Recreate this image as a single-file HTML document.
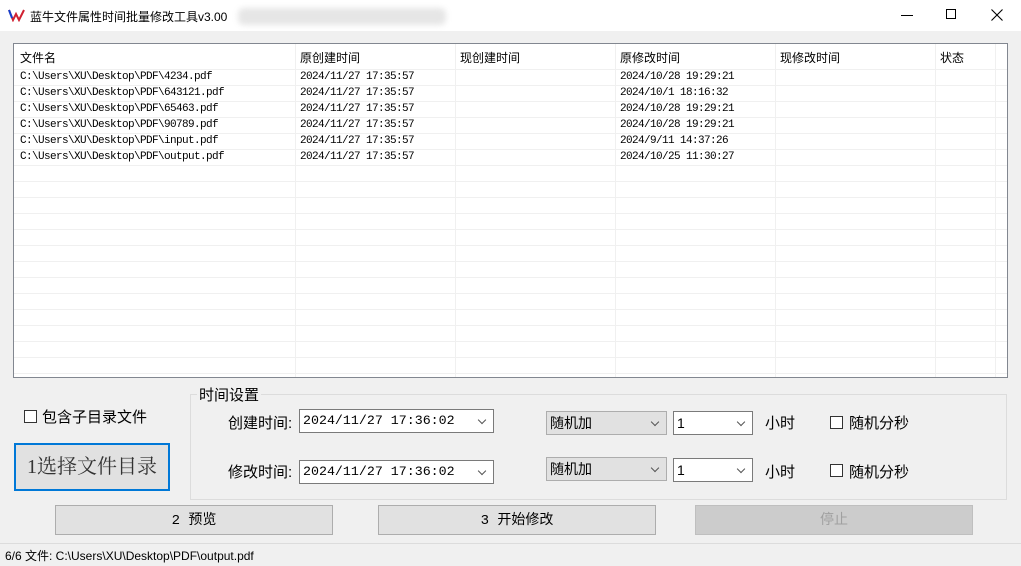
<!DOCTYPE html>
<html><head><meta charset="utf-8"><style>
*{margin:0;padding:0;box-sizing:border-box}
body{width:1021px;height:566px;background:#f0f0f0;position:relative;overflow:hidden;font-family:"Liberation Sans","Noto Sans CJK SC",sans-serif;color:#000}
.a{position:absolute;white-space:nowrap}
.title{left:0;top:0;width:1021px;height:31px;background:#fff}
.list{left:13px;top:43px;width:995px;height:335px;background:#fff;border:1px solid #828790;overflow:hidden}
.grid{left:0;top:25px;width:993px;height:320px;background:repeating-linear-gradient(to bottom,#f0f0f0 0,#f0f0f0 1px,transparent 1px,transparent 16px)}
.vl{position:absolute;top:0;width:1px;height:340px;background:#f0f0f0}
.hd{position:absolute;top:5px;font-size:12px}
.r{position:absolute;font-family:"Liberation Mono","Noto Sans CJK SC",monospace;font-size:11px;letter-spacing:-0.6px;line-height:16px;top:25px}
.cb{width:13px;height:13px;border:1px solid #333;background:#fff}
.combo{border:1px solid #7a7a7a;background:#fff;height:24px;font-size:14px;line-height:22px;padding-left:3px}
.mono{font-family:"Liberation Mono",monospace;font-size:13.3px}
.combo:after{content:"";position:absolute;right:8px;top:7px;width:5px;height:5px;border-right:1px solid #555;border-bottom:1px solid #555;transform:rotate(45deg)}
.gray{background:#e1e1e1;border-color:#adadad}
.btn{height:30px;background:#e1e1e1;border:1px solid #adadad;font-size:14px;line-height:30px;text-align:center;font-family:"Liberation Mono","Noto Sans CJK SC",monospace}
.lbl{font-size:15px}
</style></head><body>
<div class="a title"></div>
<svg class="a" style="left:8px;top:8px" width="18" height="14" viewBox="0 0 18 14"><path d="M1 2 L5 12 L8 6 L11 12 L16 2" fill="none" stroke="#d02030" stroke-width="2"/><path d="M1 2 L4 10" stroke="#1040d0" stroke-width="2"/></svg>
<div class="a" style="left:30px;top:8px;font-size:12px">蓝牛文件属性时间批量修改工具v3.00</div>
<div class="a" style="left:238px;top:8px;width:208px;height:17px;background:#e6e6e6;filter:blur(3px);border-radius:6px"></div>
<div class="a" style="left:901px;top:15px;width:12px;height:1px;background:#000"></div>
<div class="a" style="left:946px;top:9px;width:10px;height:10px;border:1px solid #000"></div>
<svg class="a" style="left:991px;top:9px" width="12" height="12"><path d="M0.5 0.5L11.5 11.5M11.5 0.5L0.5 11.5" stroke="#000" stroke-width="1.1"/></svg>

<div class="a list">
<div class="a grid"></div>
<div class="vl" style="left:281px"></div><div class="vl" style="left:441px"></div><div class="vl" style="left:601px"></div><div class="vl" style="left:761px"></div><div class="vl" style="left:921px"></div><div class="vl" style="left:981px"></div>
<div class="hd" style="left:6px">文件名</div><div class="hd" style="left:286px">原创建时间</div><div class="hd" style="left:446px">现创建时间</div><div class="hd" style="left:606px">原修改时间</div><div class="hd" style="left:766px">现修改时间</div><div class="hd" style="left:926px">状态</div>
<div class="r" style="left:6px">C:\Users\XU\Desktop\PDF\4234.pdf<br>C:\Users\XU\Desktop\PDF\643121.pdf<br>C:\Users\XU\Desktop\PDF\65463.pdf<br>C:\Users\XU\Desktop\PDF\90789.pdf<br>C:\Users\XU\Desktop\PDF\input.pdf<br>C:\Users\XU\Desktop\PDF\output.pdf</div>
<div class="r" style="left:286px">2024/11/27 17:35:57<br>2024/11/27 17:35:57<br>2024/11/27 17:35:57<br>2024/11/27 17:35:57<br>2024/11/27 17:35:57<br>2024/11/27 17:35:57</div>
<div class="r" style="left:606px">2024/10/28 19:29:21<br>2024/10/1 18:16:32<br>2024/10/28 19:29:21<br>2024/10/28 19:29:21<br>2024/9/11 14:37:26<br>2024/10/25 11:30:27</div>
</div>

<div class="a cb" style="left:24px;top:410px"></div>
<div class="a lbl" style="left:42px;top:406px">包含子目录文件</div>
<div class="a" style="left:14px;top:443px;width:156px;height:48px;border:2px solid #0078d7;background:#e1e1e1;font-family:'Liberation Serif','Noto Serif CJK SC',serif;font-size:20px;line-height:44px;text-align:center;color:#333">1选择文件目录</div>

<div class="a" style="left:190px;top:394px;width:817px;height:106px;border:1px solid #dcdcdc"></div>
<div class="a lbl" style="left:197px;top:384px;background:#f0f0f0;padding:0 2px">时间设置</div>

<div class="a lbl" style="left:228px;top:412px">创建时间:</div>
<div class="a combo mono" style="left:299px;top:409px;width:195px">2024/11/27 17:36:02</div>
<div class="a combo gray" style="left:546px;top:411px;width:121px">随机加</div>
<div class="a combo" style="left:673px;top:411px;width:80px">1</div>
<div class="a lbl" style="left:765px;top:412px">小时</div>
<div class="a cb" style="left:830px;top:416px"></div>
<div class="a lbl" style="left:849px;top:412px">随机分秒</div>

<div class="a lbl" style="left:228px;top:461px">修改时间:</div>
<div class="a combo mono" style="left:299px;top:460px;width:195px">2024/11/27 17:36:02</div>
<div class="a combo gray" style="left:546px;top:457px;width:121px">随机加</div>
<div class="a combo" style="left:673px;top:458px;width:80px">1</div>
<div class="a lbl" style="left:765px;top:461px">小时</div>
<div class="a cb" style="left:830px;top:464px"></div>
<div class="a lbl" style="left:849px;top:461px">随机分秒</div>

<div class="a btn" style="left:55px;top:505px;width:278px">2 预览</div>
<div class="a btn" style="left:378px;top:505px;width:278px">3 开始修改</div>
<div class="a btn" style="left:695px;top:505px;width:278px;background:#cccccc;border-color:#bfbfbf;color:#a0a0a0">停止</div>

<div class="a" style="left:0;top:543px;width:1021px;height:1px;background:#dcdcdc"></div>
<div class="a" style="left:5px;top:547px;font-size:12px">6/6 文件: C:\Users\XU\Desktop\PDF\output.pdf</div>
</body></html>
